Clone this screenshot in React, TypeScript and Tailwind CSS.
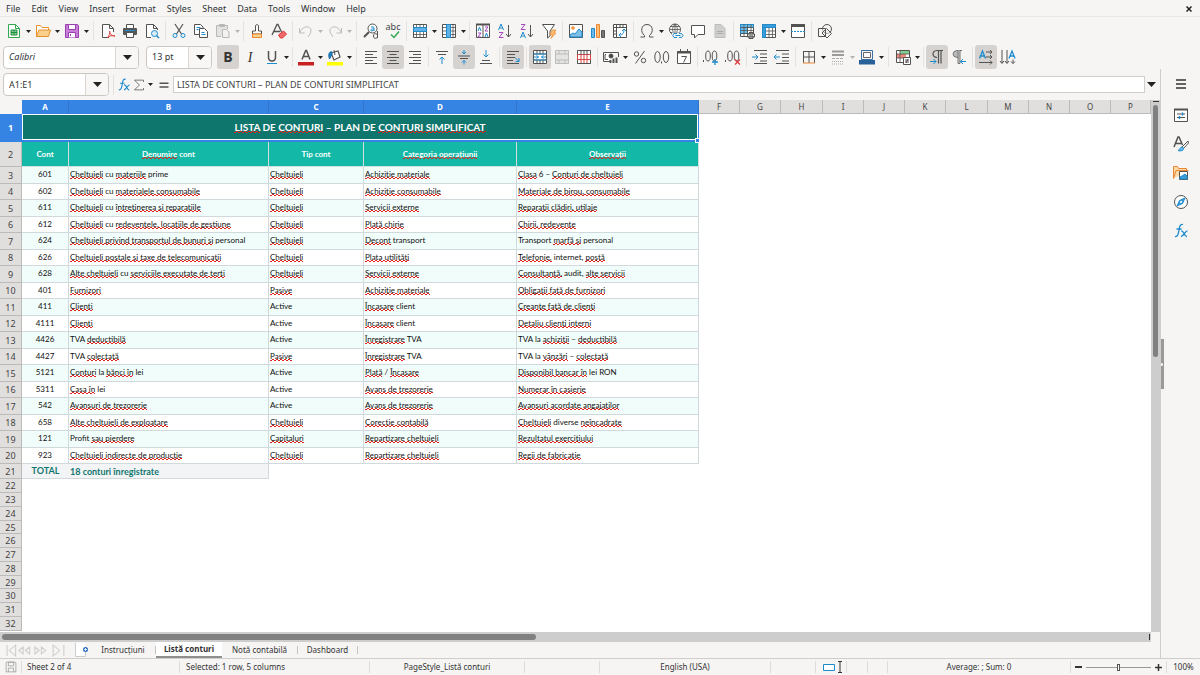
import type { ReactNode } from "react";
import clsx from "clsx";

const ui = "font-['Noto_Sans',sans-serif]";
const INK = "#525250";
const BLUE = "#1e8bcd";
const PURPLE = "#a347ba";
const ORANGE = "#ed8733";

const menus = ["File", "Edit", "View", "Insert", "Format", "Styles", "Sheet", "Data", "Tools", "Window", "Help"];

// Words between asterisks get the spell checker's wavy line.
const rows = [
  ["601", "*Cheltuieli* cu *materiile* prime", "*Cheltuieli*", "*Achiziție materiale*", "*Clasa* 6 – *Conturi de cheltuieli*"],
  ["602", "*Cheltuieli* cu *materialele consumabile*", "*Cheltuieli*", "*Achiziție consumabile*", "*Materiale de birou, consumabile*"],
  ["611", "*Cheltuieli* cu *întreținerea și reparațiile*", "*Cheltuieli*", "*Servicii externe*", "*Reparații clădiri, utilaje*"],
  ["612", "*Cheltuieli* cu *redevențele, locațiile de gestiune*", "*Cheltuieli*", "*Plată chirie*", "*Chirii, redevențe*"],
  ["624", "*Cheltuieli privind transportul de bunuri și* personal", "*Cheltuieli*", "*Decont* transport", "Transport *marfă și* personal"],
  ["626", "*Cheltuieli poștale și taxe de telecomunicații*", "*Cheltuieli*", "*Plata utilități*", "*Telefonie,* internet, *poștă*"],
  ["628", "*Alte cheltuieli* cu *serviciile executate de terți*", "*Cheltuieli*", "*Servicii externe*", "*Consultanță,* audit, *alte servicii*"],
  ["401", "*Furnizori*", "*Pasive*", "*Achiziție materiale*", "*Obligații față de furnizori*"],
  ["411", "*Clienți*", "Active", "*Încasare* client", "*Creanțe față de clienți*"],
  ["4111", "*Clienți*", "Active", "*Încasare* client", "*Detaliu clienți interni*"],
  ["4426", "TVA *deductibilă*", "Active", "*Înregistrare* TVA", "TVA la *achiziții* – *deductibilă*"],
  ["4427", "TVA *colectată*", "*Pasive*", "*Înregistrare* TVA", "TVA la *vânzări* – *colectată*"],
  ["5121", "*Conturi* la *bănci în* lei", "Active", "*Plată* / *Încasare*", "*Disponibil bancar în* lei RON"],
  ["5311", "*Casa în* lei", "Active", "*Avans de trezorerie*", "*Numerar în casierie*"],
  ["542", "*Avansuri de trezorerie*", "Active", "*Avans de trezorerie*", "*Avansuri acordate angajaților*"],
  ["658", "*Alte cheltuieli de exploatare*", "*Cheltuieli*", "*Corecție contabilă*", "*Cheltuieli* diverse *neîncadrate*"],
  ["121", "Profit *sau pierdere*", "*Capitaluri*", "*Repartizare cheltuieli*", "*Rezultatul exercițiului*"],
  ["923", "*Cheltuieli indirecte de producție*", "*Cheltuieli*", "*Repartizare cheltuieli*", "*Regii de fabricație*"],
];

const heads = ["Cont", "*Denumire* cont", "Tip cont", "*Categoria operațiunii*", "*Observații*"];

function Spell({ text }: { text: string }) {
  return (
    <>
      {text.split("*").map((part, i) =>
        i % 2 ? (
          <span
            key={i}
            className="bg-[linear-gradient(90deg,#e0241b_50%,transparent_50%),linear-gradient(90deg,#e0241b_50%,transparent_50%)] bg-[length:4px_1px,4px_1px] bg-[position:0_100%,2px_calc(100%-1px)] bg-repeat-x"
          >
            {part}
          </span>
        ) : (
          part
        )
      )}
    </>
  );
}

function Svg({ children, size = 16 }: { children: ReactNode; size?: number }) {
  return (
    <svg width={size} height={size} viewBox="0 0 16 16" fill="none" stroke={INK} strokeWidth="1" className="overflow-visible" aria-hidden="true">
      {children}
    </svg>
  );
}

function Caret({ big, faded }: { big?: boolean; faded?: boolean }) {
  return (
    <svg width={big ? 9 : 5} height={big ? 5 : 3} viewBox="0 0 8 4" preserveAspectRatio="none" aria-hidden="true">
      <path d="M0 0h8L4 4z" fill={faded ? "#b5b5b3" : "#222"} />
    </svg>
  );
}

const icons: Record<string, ReactNode> = {
  new: (
    <>
      <path d="M2.500 1.500h7l4 4v9h-11z" fill="#fff" stroke="#33a650" />
      <path d="M9.500 1.500v4h4" stroke="#33a650" />
      <path d="M5 7h6v5H5zM5 9.500h6M8 7v5" fill="#8fd19e" stroke="#1f8f3d" />
    </>
  ),
  open: (
    <>
      <path d="M1.500 13.500v-11h4l1.500 2h6.500v3" fill="#fff" stroke="#e8912d" />
      <path d="M1.500 13.500l2.500-6.500h11.500l-2 6.500z" fill="#fbd08c" stroke="#e8912d" />
    </>
  ),
  save: (
    <>
      <path d="M1.500 1.500h12l1 1v12h-13z" fill="#c77fd8" stroke="#9b3fb0" />
      <path d="M4.500 1.500h7v5h-7zM4.500 14.500v-5h7v5" fill="#fff" stroke="#9b3fb0" />
      <path d="M6.500 11v2" stroke="#9b3fb0" />
    </>
  ),
  pdf: (
    <>
      <path d="M9 14.500H2.500v-13h7l4 4V9M9.500 1.500v4h4" fill="#fff" />
      <path d="M7 15c3-3 3-6 2.500-7 0 3 2 5 5.500 5-3-1-6 0-8 2z" stroke="#e03e3e" />
    </>
  ),
  print: (
    <>
      <path d="M4.500 5V1.500h7V5" fill="#fff" />
      <rect x="1" y="5" width="14" height="7" rx="1" fill="#55585a" stroke="none" />
      <path d="M4.500 9.500h7v5h-7z" fill="#fff" />
      <path d="M3 7.500h10" stroke={BLUE} />
    </>
  ),
  preview: (
    <>
      <path d="M7 14.500H2.500v-13h7l4 4V7M9.500 1.500v4h4" fill="#fff" />
      <circle cx="10.500" cy="10.500" r="3" fill="#d9edf8" stroke={BLUE} />
      <path d="M12.700 12.700l2.300 2.300" stroke={BLUE} strokeWidth="1.500" />
    </>
  ),
  cut: (
    <>
      <path d="M4 1l6.500 10M12 1L5.500 11" strokeWidth="1.200" />
      <circle cx="4" cy="12.500" r="2" stroke={BLUE} />
      <circle cx="12" cy="12.500" r="2" stroke={BLUE} />
    </>
  ),
  copy: (
    <>
      <path d="M1.500 1.500h6l2.500 2.500v7.500H1.500z" fill="#fff" />
      <path d="M6.500 5.500h5l3 3v6h-8z" fill="#fff" />
      <path d="M3.500 4.500h4M3.500 6.500h2M8.500 9.500h3M8.500 11.500h4" stroke={BLUE} />
    </>
  ),
  paste: (
    <>
      <path d="M6 13.500H1.500v-11h11V6M4.500 3.500v-2h5v2z" fill="#e3e3e1" stroke="#b8b8b6" />
      <path d="M7.500 6.500h4l2.500 2.500v5.500H7.500z" fill="#f2f2f0" stroke="#b8b8b6" />
    </>
  ),
  brush: (
    <>
      <path d="M6.500 8V2.500q1.500-2 3 0V8h3v3h-9V8z" fill="#fff" />
      <path d="M3.500 11h9v3.500h-9z" fill="#fbd08c" stroke={ORANGE} />
    </>
  ),
  clear: (
    <>
      <path d="M1 12L6 1.500h1L10.500 9M3 8.500h6" strokeWidth="1.300" />
      <path d="M7.500 12l5-4 3 3-4 4H9.500z" fill="#ef6a6a" stroke="#d33" />
    </>
  ),
  undo: <path d="M1.500 5v5h5M2 9.500C4 3 12 2 13 7c.5 3-2 5-3 7" stroke="#bdbdbb" />,
  redo: <path d="M14.500 5v5h-5M14 9.500C12 3 4 2 3 7c-.5 3 2 5 3 7" stroke="#bdbdbb" />,
  find: (
    <>
      <circle cx="9.500" cy="5.500" r="4.500" fill="#fff" />
      <path d="M6 9l-5 5" strokeWidth="2" />
      <path d="M8 4q3-1 3 1v3M11 6c-4-.5-4 2-2 2l2-1" stroke={BLUE} />
      <path d="M14.500 8v7M14.500 12c-1-2-4-2-4 1s3 3 4 1" />
    </>
  ),
  spell: (
    <>
      <text x="8" y="7" textAnchor="middle" fontSize="9" fill="#444" stroke="none" fontFamily="Noto Sans, sans-serif">
        abc
      </text>
      <path d="M6 11.500l3 3 5-6" stroke="#33a650" strokeWidth="1.500" />
    </>
  ),
  row: (
    <>
      <path d="M1.500 1.500h13v13h-13z" fill="#fff" />
      <path d="M4.500 1.500v13M8 1.500v13M11.500 1.500v13M1.500 11.500h13" strokeWidth=".8" />
      <path d="M1.500 4.500h13v4h-13z" fill="#5fb2e6" stroke={BLUE} />
    </>
  ),
  col: (
    <>
      <path d="M1.500 1.500h13v13h-13z" fill="#fff" />
      <path d="M1.500 4.500h13M1.500 8h13M1.500 11.500h13M12 1.500v13" strokeWidth=".8" />
      <path d="M5.500 1.500h4v13h-4z" fill="#5fb2e6" stroke={BLUE} />
    </>
  ),
  sort: (
    <>
      <path d="M1.500 1.500h13v13h-13zM8 2v12" fill="#fff" />
      <path d="M1 1.500h14" strokeWidth="2" />
      <path d="M3 8l1.500-4L6 8M10 14l1.500-4 1.500 4" stroke={BLUE} />
      <path d="M3 10h3l-3 4h3M10 4h3l-3 4h3" stroke={PURPLE} />
    </>
  ),
  asc: (
    <>
      <path d="M1.500 7L4 1l2.500 6M2.500 5h3" stroke={BLUE} />
      <path d="M2 9.500h4L2 14.500h4.500" stroke={PURPLE} />
      <path d="M11.500 2v12M9 11l2.500 3 2.500-3" />
    </>
  ),
  desc: (
    <>
      <path d="M2 1.500h4L2 6.500h4.500" stroke={PURPLE} />
      <path d="M1.500 15L4 9l2.500 6M2.500 13h3" stroke={BLUE} />
      <path d="M11.500 2v12M9 11l2.500 3 2.500-3" />
    </>
  ),
  filter: (
    <>
      <path d="M1.500 1.500h12L9 8v5l-2.500 2V8z" fill="#fff" />
      <path d="M11 7h4l-2 3h2l-5 5.500 1.500-4H9z" fill="#fbbd70" stroke={ORANGE} strokeWidth=".7" />
    </>
  ),
  image: (
    <>
      <path d="M1.500 1.500h13v13h-13z" fill="#fff" />
      <circle cx="5" cy="5" r="1.300" fill="#fbbd70" stroke={ORANGE} />
      <path d="M2 12l3-2 2 1 4-5 3 3v5H2z" fill="#7cc0ea" stroke={BLUE} />
    </>
  ),
  chart: (
    <>
      <path d="M1.500 5.500h3v9h-3z" fill="#6db9e8" stroke={BLUE} />
      <path d="M6.500 1.500h3v13h-3z" fill="#fbbd70" stroke={ORANGE} />
      <path d="M11.500 7.500h3v7h-3z" fill="#777" />
    </>
  ),
  pivot: (
    <>
      <path d="M1.500 1.500h13v13h-13zM1.500 4.500h13M4.500 1.500v13M8 1.500v3M11 1.500v3M1.500 8h3M1.500 11h3" fill="#fff" />
      <path d="M7 12c4 0 5-2 5-6M10 8l2-2 2 2M9 10l-2 2 2 2" stroke={BLUE} />
    </>
  ),
  omega: <path d="M1.500 14h4v-1.500C1 9 2 1.500 8 1.500s7 7.500 2.500 11V14h4" />,
  link: (
    <>
      <circle cx="7" cy="6.500" r="5.500" fill="#fff" />
      <path d="M1.500 6.500h11M7 1v11M2.500 3.500h9M2.500 9.500h9M7 1q-5 5.500 0 11M7 1q5 5.500 0 11" strokeWidth=".8" />
      <path d="M4 9.500h12v6H4z" fill="#f6f5f4" stroke="none" />
      <path d="M9 10.500H6q-2.500 2 0 4h3M11 10.500h2.500q3 2 0 4H11M7.500 12.500h5" stroke={BLUE} />
    </>
  ),
  comment: <path d="M1.500 2.500h13v9H8l-3.500 3.500v-3.500h-3z" fill="#fff" />,
  header: (
    <>
      <path d="M3 1.500h6l4 4v9H3z" fill="#cfcfcd" stroke="#bdbdbb" />
      <path d="M5 8.500h6M5 10.500h6" stroke="#aaa" />
    </>
  ),
  printarea: (
    <>
      <path d="M1.500 1.500h13v12h-13z" fill="#fff" />
      <path d="M1.500 1.500h13v3h-13zM1.500 4.500h7v6h-7z" fill="#6db9e8" stroke={BLUE} />
      <path d="M1.500 4.500h13M1.500 7.500h13M1.500 10.500h13M5 1.500v12M8.500 1.500v12M12 1.500v12" strokeWidth=".8" />
      <path d="M8.500 11h7v3h-7zM10 9.500h4V11M10 13h4v2.500h-4z" fill="#ddd" />
    </>
  ),
  freeze: (
    <>
      <path d="M1.500 1.500h13v13h-13z" fill="#fff" />
      <path d="M4.500 1.500v13M8 4.500v10M11.500 4.500v10M1.500 4.500h13M1.500 8h13M1.500 11.500h13" strokeWidth=".8" />
      <path d="M1.500 1.500h13v3h-13zM1.500 4.500h3v10h-3z" fill="#3d9ddb" stroke={BLUE} />
    </>
  ),
  split: (
    <>
      <path d="M1.500 2.500h13v12h-13z" fill="#fff" />
      <path d="M1 2.500h14" strokeWidth="3" />
      <path d="M1 8.500h14" stroke={BLUE} strokeDasharray="2 1" />
    </>
  ),
  shapes: (
    <>
      <circle cx="10" cy="6" r="4.500" />
      <path d="M1.500 5.500h7v8h-7zM9.500 5.500l5 5-4.500 4.500-5-5z" fill="#f6f5f4" fillOpacity=".5" />
    </>
  ),
  bold: (
    <text x="8" y="13" textAnchor="middle" fontSize="14" fontWeight="bold" fill="#333" stroke="none" fontFamily="Open Sans, sans-serif">
      B
    </text>
  ),
  italic: (
    <text x="8" y="13" textAnchor="middle" fontSize="14" fontStyle="italic" fill="#333" stroke="none" fontFamily="Liberation Serif, serif">
      I
    </text>
  ),
  underline: (
    <>
      <path d="M4.500 2v6q0 4 3.500 4t3.500-4V2" strokeWidth="1.500" />
      <path d="M3 14.500h10" stroke={BLUE} />
    </>
  ),
  color: (
    <>
      <path d="M4 10.500L7.700 1.500h.8l3.500 9M5 7.500h6" strokeWidth="1.500" />
      <path d="M0 13h16v3.500H0z" fill="#c9211e" stroke="none" />
    </>
  ),
  fill: (
    <>
      <path d="M4 4l7-2 2 6-6 3z" fill="#fff" strokeWidth="1.200" />
      <path d="M7 1l1 5" />
      <path d="M5 3C2 2 1 6 2.500 10L5 5z" fill={BLUE} stroke="#14629c" />
      <path d="M0 13h16v3.500H0z" fill="#ffff00" stroke="none" />
    </>
  ),
  left: <path d="M2 2.500h12M2 5.500h8M2 8.500h12M2 11.500h8M2 14.500h12" />,
  center: <path d="M2 2.500h12M4.500 5.500h7M2 8.500h12M4.500 11.500h7M2 14.500h12" />,
  right: <path d="M2 2.500h12M6 5.500h8M2 8.500h12M6 11.500h8M2 14.500h12" />,
  top: (
    <>
      <path d="M2 2.500h12M4 5.500h8" />
      <path d="M8 15V8M5.500 10.500L8 8l2.500 2.500" stroke={BLUE} />
    </>
  ),
  middle: (
    <>
      <path d="M2 7h12M4 9.500h8" />
      <path d="M8 1v4M6 3l2 2 2-2M8 15.500v-4M6 13.500l2-2 2 2" stroke={BLUE} />
    </>
  ),
  bottom: (
    <>
      <path d="M4 11.500h8M2 14.500h12" />
      <path d="M8 1v7M5.500 5.500L8 8l2.500-2.500" stroke={BLUE} />
    </>
  ),
  wrap: (
    <>
      <path d="M2 2.500h12M2 5.500h8M2 8.500h8M2 11.500h6M2 14.500h12" />
      <path d="M10 8.500l4 4M14 9v3.500h-3.500" stroke={BLUE} />
    </>
  ),
  merge: (
    <>
      <path d="M1.500 1.500h13v13h-13zM1.500 5h13M1.500 11h13M5 1.500V5M8 1.500V5M11 1.500V5M5 11v3.500M8 11v3.500M11 11v3.500" fill="#fff" />
      <path d="M2 8h4.500M4.500 6.500L6.500 8l-2 1.500M14 8H9.500M11.500 6.500L9.500 8l2 1.500M1.500 5h13M1.500 11h13" stroke={BLUE} />
    </>
  ),
  unmerge: <path d="M1.500 1.500h13v13h-13zM1.500 5h13M1.500 11h13M5 1.500V5M11 1.500V5M5 11v3.500M11 11v3.500" fill="#e4e4e2" stroke="#bdbdbb" />,
  mergecells: (
    <>
      <path d="M1.500 1.500h13v13h-13z" fill="#fff" />
      <path d="M1.500 5.500h13v5h-13zM5 5.500v9M8 5.500v9M11 5.500v9" fill="#fff" stroke="#dd4444" />
      <path d="M5 1.500v4M8 1.500v4M11 1.500v4M1.500 14.500h13" />
    </>
  ),
  currency: (
    <>
      <path d="M12 3.500H.5v9H8" fill="#fff" />
      <path d="M15.500 3.500V8M12 3.500h3.500M3 5.500h-1v5h3" />
      <circle cx="8" cy="7" r="2" fill="#444" />
      <path d="M7.500 14v-3M10.500 14v-4.500M13.500 14V8.500" strokeWidth="2" />
    </>
  ),
  percent: (
    <>
      <circle cx="4.500" cy="5" r="2.200" />
      <circle cx="11.500" cy="11.500" r="2.200" />
      <path d="M12.500 2l-9 12.500" />
    </>
  ),
  number: (
    <>
      <ellipse cx="3.500" cy="8" rx="2.700" ry="5.500" />
      <ellipse cx="12" cy="8" rx="2.700" ry="5.500" />
      <path d="M7.500 12.500v2" />
    </>
  ),
  date: (
    <>
      <path d="M1.500 2.500h13v12h-13z" fill="#fff" />
      <path d="M1 3.500h14" strokeWidth="2" />
      <path d="M4.500 0v3M11.500 0v3M5.500 7.500h5l-3 6" />
    </>
  ),
  adddec: (
    <>
      <ellipse cx="5" cy="7" rx="2.300" ry="5" />
      <ellipse cx="11.500" cy="7" rx="2.300" ry="5" />
      <path d="M.5 11v2" />
      <path d="M9 13h6M12 10v6" stroke={BLUE} strokeWidth="1.300" />
    </>
  ),
  deldec: (
    <>
      <ellipse cx="5" cy="7" rx="2.300" ry="5" />
      <ellipse cx="11.500" cy="7" rx="2.300" ry="5" />
      <path d="M.5 11v2" />
      <path d="M10 10.500l5 5M15 10.500l-5 5" stroke="#e03e3e" strokeWidth="1.300" />
    </>
  ),
  indent: (
    <>
      <path d="M2 1.500h13M8 5h7M8 8.500h7M8 12h7M2 14.500h13" />
      <path d="M0 8h6M3.500 5.500L6 8l-2.500 2.500" stroke={BLUE} />
    </>
  ),
  outdent: (
    <>
      <path d="M2 1.500h13M8 5h7M8 8.500h7M8 12h7M2 14.500h13" />
      <path d="M6 8H0M2.500 5.500L0 8l2.500 2.500" stroke={BLUE} />
    </>
  ),
  borders: (
    <>
      <path d="M2 2.500h12M2.500 2v12M13.500 2v12M8 2v12M2 8h12" />
      <path d="M2 14h12" stroke={ORANGE} />
    </>
  ),
  linestyle: (
    <>
      <path d="M2 2.500h12M2 6h12" stroke="#9a9a98" strokeWidth="2" />
      <path d="M2 9.500h12" stroke="#aaa" strokeDasharray="3 1" />
      <path d="M2 12.500h12M2 15h12" stroke="#aaa" strokeDasharray="1 1" />
    </>
  ),
  linecolor: (
    <>
      <path d="M2.500 1.500h11v9h-11z" stroke="#3a6ea5" />
      <path d="M4.500 3.500h7v5h-7z" fill="#fff" stroke="#666" />
      <path d="M0 11h16v4.500H0z" fill="#2a6099" stroke="none" />
    </>
  ),
  cond: (
    <>
      <path d="M1.500 1.500h13v12h-13z" fill="#fff" />
      <path d="M5 2h9v3H5z" fill="#7fd08f" stroke="none" />
      <path d="M2 5h9v4H2z" fill="#f08a7d" stroke="none" />
      <path d="M1.500 5h13M1.500 9h13M5 1.500v12" strokeWidth=".8" />
      <path d="M8.500 8.500h7v7h-7zM10 11h4M10 13h4M13 10l-2 4" fill="#fff" />
    </>
  ),
  ltr: (
    <>
      <path d="M14 1.500H8q-4 .5-4 3.500t4 3.500M9.500 1.500v13M12 1.500v13" strokeWidth="1.200" />
      <path d="M1 12.500h6M4.500 10L7 12.500 4.500 15" stroke={BLUE} />
    </>
  ),
  rtl: (
    <>
      <path d="M9 1.500H6q-4 .5-4 3.500t4 3.500h1z" fill="#bbb" stroke="#777" />
      <path d="M7 1.500v13h2v-13h2" fill="#ccc" stroke="#777" />
      <path d="M15 12.500H9.500M12 10l-2.500 2.500L12 15" stroke={BLUE} />
    </>
  ),
  horiz: (
    <>
      <path d="M1.500 9.500L4.500 2l3 7.500M2.500 7h4" stroke={BLUE} strokeWidth="1.300" />
      <path d="M8 3h6M12 1l2 2-2 2M8 8h6M12 6l2 2-2 2M1 13.500h13M12 11.500l2 2-2 2" />
    </>
  ),
  vert: (
    <>
      <path d="M9 9.500l3-7.500 3 7.500M10 7h4" stroke={BLUE} strokeWidth="1.300" />
      <path d="M2 1v13M0 12l2 2.500L4 12M7 1v13M5 12l2 2.500L9 12M13 10.500v4M11 12.500l2 2 2-2" />
    </>
  ),
};

const insertBar = [
  "new+", "open+", "save+", "||", "pdf", "print", "preview", "|", "cut", "copy", "paste-", "|", "brush", "clear", "|",
  "undo-", "redo-", "||", "find", "spell", "|", "row+", "col+", "|", "sort", "asc", "desc", "filter", "|", "image",
  "chart", "pivot", "|", "omega+", "link", "comment", "header", "|", "printarea", "freeze+", "split", "|", "shapes",
];

const formatBar = [
  "*bold", "italic", "underline+", "|", "color+", "fill+", "||", "left", "*center", "right", "|", "top", "*middle",
  "bottom", "|", "*wrap", "|", "*merge", "unmerge", "mergecells", "|", "currency+", "percent", "number", "date", "|",
  "adddec", "deldec", "|", "indent", "outdent", "|", "borders+", "linestyle-", "linecolor+", "||", "cond+", "|", "*ltr",
  "rtl", "|", "*horiz", "vert",
];

// "*" marks a pressed button, "+" a drop-down arrow, "-" a greyed one.
function Tools({ items }: { items: string[] }) {
  return (
    <>
      {items.map((item, i) => {
        if (item[0] === "|")
          return (
            <div key={i} className={clsx("flex justify-center shrink-0", item === "||" ? "w-[7px]" : "w-[5px]")}>
              <div className="h-5 w-px bg-[#e4e3e1]" />
            </div>
          );
        const name = item.replace(/[*+-]/g, "");
        return (
          <div key={i} className="flex shrink-0">
            <button
              aria-label={name}
              className={clsx("flex h-6 w-[22px] items-center justify-center rounded-[3px]", item[0] === "*" && "bg-[#d5d2cf]")}
            >
              <Svg>{icons[name]}</Svg>
            </button>
            {/[+-]$/.test(item) && (
              <button aria-label={`${name} options`} className="flex w-[7px] items-center justify-center pt-px">
                <Caret faded={item.endsWith("-")} />
              </button>
            )}
          </div>
        );
      })}
    </>
  );
}

function Combo({ label, value, className }: { label: string; value: string; className: string }) {
  return (
    <div className={clsx("relative h-[23px] shrink-0 overflow-hidden rounded border border-[#cdc7c2] bg-white", className)}>
      <select aria-label={label} className="block h-full w-full appearance-none pl-[5px] pr-6 text-[9px] leading-4 outline-none">
        <option>{value}</option>
      </select>
      <span className="pointer-events-none absolute inset-y-0 right-0 flex w-[23px] items-center justify-center border-l border-[#dad6d2] bg-[#f8f7f6]">
        <Caret big />
      </span>
    </div>
  );
}

function Fx({ size = 16 }: { size?: number }) {
  return (
    <Svg size={size}>
      <path d="M10 1.500C7 .5 6.500 4 6 7s-1 7-4 6.500M3.500 6h5" stroke={BLUE} strokeWidth="1.300" />
      <path d="M8 8c3-1 3 6 6 5.500M14.500 8c-2-.5-4 5.500-6.500 5.500" stroke={BLUE} strokeWidth="1.300" />
    </Svg>
  );
}

function Formula() {
  return (
    <div className="flex h-[31px] items-center pl-[3px] pr-1">
      <Combo label="Name box" value="A1:E1" className="w-[106px]" />
      <div className="ml-1 h-5 w-px bg-[#e3e1df]" />
      <button aria-label="Function wizard" className="ml-[3px]"><Fx size={14} /></button>
      <button aria-label="Sum" className="ml-[2px]">
        <Svg size={12}><path d="M14 4V1.500H2L8.500 8 2 14.500h12V12" /></Svg>
      </button>
      <button aria-label="Sum options" className="ml-[3px]"><Caret /></button>
      <button aria-label="Formula" className="ml-[5px] mr-[3px]">
        <Svg size={12}><path d="M2 5.500h12M2 10.500h12" strokeWidth="2" /></Svg>
      </button>
      <input
        aria-label="Input line"
        defaultValue="LISTA DE CONTURI – PLAN DE CONTURI SIMPLIFICAT"
        className="h-[17px] min-w-0 flex-1 border border-[#d0cecc] bg-white pl-[3px] text-[9px] text-[#444] outline-none"
      />
      <button aria-label="Expand formula bar" className="ml-[2px]"><Caret big /></button>
    </div>
  );
}

const letters = "ABCDEFGHIJKLMNOP".split("");
const cols = ["w-[47px]", "w-[200px]", "w-[95px]", "w-[153px]", "w-[182px]"];

function RowHead({ n, on }: { n: number; on?: boolean }) {
  return (
    <th
      scope="row"
      className={clsx(
        ui, "border-b border-r p-0 pt-px text-[9px] leading-[10px]",
        on ? "border-[#3584e4] bg-[#3584e4] font-bold text-white" : "border-[#bdbbb9] bg-[#e1dfdd] font-normal text-[#444]"
      )}
    >
      {n}
    </th>
  );
}

function Sheet() {
  return (
    <div className="min-w-0 flex-1 overflow-hidden bg-white">
      <table className="w-full table-fixed border-separate border-spacing-0 font-[Lato,sans-serif] text-[#111]">
        <colgroup>
          <col className="w-[22px]" />
          {letters.map((l, i) => (
            <col key={l} className={i < 5 ? cols[i] : i === 15 ? "w-auto" : i % 4 === 3 ? "w-[42px]" : "w-[41px]"} />
          ))}
        </colgroup>
        <thead>
          <tr className={clsx(ui, "h-[14px] text-[8px] leading-3")}>
            <td className="bg-[#f6f5f4] p-0" />
            {letters.map((l, i) => (
              <th
                key={l}
                scope="col"
                className={clsx(
                  "border-r p-0",
                  i < 5 ? "border-[#2f75ca] bg-[#3584e4] font-bold text-white" : "border-b border-[#bdbbb9] bg-[#e1dfdd] font-normal text-[#444]"
                )}
              >
                {l}
              </th>
            ))}
          </tr>
        </thead>
        <tbody>
          <tr className="h-7">
            <RowHead n={1} on />
            <td colSpan={5} className="relative border-b-2 border-r border-[#3584e4] bg-[#0f766e] p-0 text-center text-[10px] font-bold leading-4 text-white ring-1 ring-inset ring-white">
              <Spell text="*LISTA* DE *CONTURI* – PLAN DE *CONTURI SIMPLIFICAT*" />
              <span className="absolute -bottom-[3px] -right-[2px] size-[5px] border border-white bg-[#3584e4]" />
            </td>
          </tr>
          <tr className="h-[25px]">
            <RowHead n={2} />
            {heads.map((h) => (
              <th key={h} className="border-b border-r border-[#cfe0dd] bg-[#14b8a6] p-0 text-[8px] font-bold leading-3 text-white">
                <Spell text={h} />
              </th>
            ))}
          </tr>
          {rows.map((r, i) => (
            <tr key={r[0]} className={clsx(i % 2 ? "h-4" : "h-[17px] bg-[#f0fdfa]")}>
              <RowHead n={i + 3} />
              {r.map((c, j) => (
                <td
                  key={j}
                  className={clsx(
                    "whitespace-nowrap border-b border-r border-[#d1d9dc] p-0 align-top text-[8px] leading-[15px]",
                    j ? "pl-px" : "text-center"
                  )}
                >
                  <Spell text={c} />
                </td>
              ))}
            </tr>
          ))}
          <tr className="h-[15px] text-[9px] font-bold leading-[13px] text-[#0f766e]">
            <RowHead n={21} />
            <td className="border-b border-[#d1d9dc] bg-[#f3f4f6] p-0 text-center align-top">TOTAL</td>
            <td className="border-b border-r border-[#d1d9dc] bg-[#f3f4f6] p-0 pl-px">18 conturi înregistrate</td>
          </tr>
          {Array.from({ length: 11 }, (_, i) => (
            <tr key={i} className={i % 4 === 3 ? "h-[13px]" : "h-[14px]"}>
              <RowHead n={22 + i} />
            </tr>
          ))}
        </tbody>
      </table>
    </div>
  );
}

function Sidebar() {
  return (
    <aside className="flex w-10 shrink-0 flex-col items-center gap-[13px] border-l border-[#cfcdcb] pt-[7px]">
      <button aria-label="Sidebar settings" className="mb-[2px]">
        <Svg><path d="M3 4h10M3 8h10M3 12h10" stroke="#333" strokeWidth="1.500" /></Svg>
      </button>
      <button aria-label="Properties">
        <Svg>
          <path d="M1.500 2.500h13v12h-13z" fill="#fff" />
          <path d="M1 2.500h14" strokeWidth="2" />
          <path d="M4 7h8M4 10.500h8" />
          <path d="M9.500 5.500v3M6.500 9v3" stroke={BLUE} strokeWidth="1.500" />
        </Svg>
      </button>
      <button aria-label="Styles">
        <Svg>
          <path d="M1 11L5 1h1l3.500 8M2.500 7.500h5.500" strokeWidth="1.500" />
          <path d="M15 5l-6 6 1.500 1.500L15.500 7z" fill="#fff" />
          <path d="M9 11c-2 0-2 3-4 3.500 3 1 6 0 5.500-2.500z" fill="#6db9e8" stroke={BLUE} />
        </Svg>
      </button>
      <button aria-label="Gallery">
        <Svg>
          <path d="M.5 13.500v-12h4l1 2h8v3M.5 13.500L3 5.500h12.500" fill="#fbd9a8" stroke={ORANGE} />
          <path d="M6.500 6.500h8v8h-8z" fill="#fff" />
          <path d="M7 12l2-1 3-2 2 2v3H7z" fill="#3d9ddb" stroke={BLUE} />
        </Svg>
      </button>
      <button aria-label="Navigator">
        <Svg>
          <circle cx="8" cy="8" r="6.500" fill="#fff" />
          <path d="M12 4l-2.500 5.500L4 12l2.500-5.500z" fill="#3d9ddb" stroke={BLUE} />
          <circle cx="8" cy="8" r="1" fill="#fff" stroke="none" />
        </Svg>
      </button>
      <button aria-label="Functions"><Fx /></button>
    </aside>
  );
}

function TabBar() {
  const arrows = ["M1 1v11M9 1L3 6.500 9 12z", "M16 3l-4 3.500 4 3.500zM22 3l-4 3.500 4 3.500z", "M27 3l4 3.500-4 3.500zM33 3l4 3.500-4 3.500z", "M44 1l6 5.500-6 5.500zM54 1v11"];
  return (
    <div className="flex h-4 items-stretch pl-[6px] text-[8px] text-[#333]">
      <button aria-label="Scroll sheets" className="flex w-[69px] items-center">
        <svg width="60" height="13" viewBox="0 0 56 13" fill="none" stroke="#cfcdcb" preserveAspectRatio="none" aria-hidden="true">
          {arrows.map((d) => <path key={d} d={d} />)}
        </svg>
      </button>
      <button aria-label="Add sheet" className="flex w-4 items-center">
        <svg width="14" height="14" viewBox="0 0 14 14" aria-hidden="true">
          <path d="M.5 0v13.500h10V9" fill="#fff" stroke="#ccc" />
          <path d="M1 0h9v13H1z" fill="#fff" />
          <circle cx="10.500" cy="6.500" r="2.500" fill="#2a6fc0" />
          <path d="M9 6.500h3M10.500 5v3" stroke="#fff" strokeWidth=".8" />
        </svg>
      </button>
      <button className="my-1 w-[65px] border-r border-[#c5c3c1] leading-[8px]">Instrucțiuni</button>
      <button className="w-[66px] border-b-2 border-[#8f8f8d] bg-white font-bold leading-[14px]">Listă conturi</button>
      <button className="my-1 w-[76px] border-r border-[#c5c3c1] leading-[8px]">Notă contabilă</button>
      <button className="my-1 w-[60px] border-r border-[#c5c3c1] leading-[8px]">Dashboard</button>
    </div>
  );
}

function StatusBar() {
  const cell = "flex h-3 items-center border-r border-[#dedcda]";
  return (
    <footer className="grid h-[17px] grid-cols-[22px_158fr_190fr_155fr_75fr_171fr_45fr_31fr_21fr_20fr_183fr_96px_33px] items-center border-t border-[#d0cecc] text-[8px] text-[#333]">
      <div className={clsx(cell, "justify-center")}>
        <Svg size={12}>
          <path d="M1.500 1.500h12l1 1v12h-13zM4.500 1.500h7v5h-7zM4.500 14.500v-5h7v5" stroke="#999" />
        </Svg>
      </div>
      <div className={clsx(cell, "pl-[5px]")}>Sheet 2 of 4</div>
      <div className={clsx(cell, "pl-[6px]")}>Selected: 1 row, 5 columns</div>
      <div className={clsx(cell, "justify-center")}>PageStyle_Listă conturi</div>
      <div className={cell} />
      <div className={clsx(cell, "justify-center")}>English (USA)</div>
      <div className={cell} />
      <div className={clsx(cell, "justify-center pl-1")}>
        <svg width="20" height="12" viewBox="0 0 20 12" fill="none" aria-hidden="true">
          <path d="M.5 3.500h11v6H.5z" fill="#fff" stroke={BLUE} />
          <path d="M15 .5h4M17 .5v11M15 11.500h4" stroke="#333" />
        </svg>
      </div>
      <div className={cell} />
      <div className={cell} />
      <div className={clsx(cell, "justify-center")}>Average: ; Sum: 0</div>
      <div className={clsx(cell, "justify-center gap-1")}>
        <button aria-label="Zoom out" className="h-[2px] w-[7px] bg-[#333]" />
        <input
          type="range"
          aria-label="Zoom"
          defaultValue="50"
          className="h-2 w-[65px] appearance-none bg-transparent [&::-webkit-slider-runnable-track]:h-px [&::-webkit-slider-runnable-track]:bg-[#999] [&::-webkit-slider-thumb]:-mt-[3px] [&::-webkit-slider-thumb]:h-[7px] [&::-webkit-slider-thumb]:w-[3px] [&::-webkit-slider-thumb]:appearance-none [&::-webkit-slider-thumb]:border [&::-webkit-slider-thumb]:border-[#555] [&::-webkit-slider-thumb]:bg-white"
        />
        <button aria-label="Zoom in">
          <svg width="7" height="7" viewBox="0 0 7 7" aria-hidden="true"><path d="M0 3.500h7M3.500 0v7" stroke="#333" strokeWidth="1.500" /></svg>
        </button>
      </div>
      <div className="text-center">100%</div>
    </footer>
  );
}

export default function App() {
  return (
    <div className={clsx(ui, "flex h-screen flex-col overflow-hidden bg-[#f6f5f4] text-[#2e3436]")}>
      <nav className="flex h-[17px] shrink-0 items-center gap-[11px] border-b border-[#e8e6e4] pl-[6px] pr-[8px] pt-px text-[9px]">
        {menus.map((m) => <button key={m}>{m}</button>)}
        <button aria-label="Close document" className="ml-auto">
          <svg width="6" height="6" viewBox="0 0 6 6" aria-hidden="true"><path d="M.5.5l5 5M5.500.5l-5 5" stroke="#222" strokeWidth="1.500" /></svg>
        </button>
      </nav>
      <div className="flex h-7 shrink-0 items-center pl-[3px]">
        <Tools items={insertBar} />
      </div>
      <div className="flex h-6 shrink-0 items-center pl-[3px]">
        <Combo label="Font name" value="Calibri" className="w-[136px] italic" />
        <Combo label="Font size" value="13 pt" className="ml-[7px] mr-[5px] w-[66px]" />
        <Tools items={formatBar} />
      </div>
      <div className="flex min-h-0 flex-1">
        <main className="flex min-w-0 flex-1 flex-col">
          <Formula />
          <div className="flex min-h-0 flex-1">
            <Sheet />
            <div className="flex w-[9px] shrink-0 flex-col items-center bg-[#cdcdcd]">
              <div className="mt-px h-px w-[6px] bg-[#333]" />
              <div className="mt-[3px] h-[252px] w-[5px] rounded-full bg-[#7f807f]" />
            </div>
          </div>
          <div className="mr-[9px] flex h-[10px] shrink-0 items-center justify-between bg-[#cdcdcd] pl-[2px] pr-px">
            <div className="h-[6px] w-[534px] rounded-full bg-[#7f807f]" />
            <div className="h-[6px] w-px bg-[#333]" />
          </div>
          <TabBar />
        </main>
        <div className="mb-[269px] flex h-[50px] w-0 items-center self-end">
          <div className="flex h-full w-1 shrink-0 items-center bg-[#999]">
            <span className="size-[3px] rounded-full bg-white" />
          </div>
        </div>
        <Sidebar />
      </div>
      <StatusBar />
    </div>
  );
}
